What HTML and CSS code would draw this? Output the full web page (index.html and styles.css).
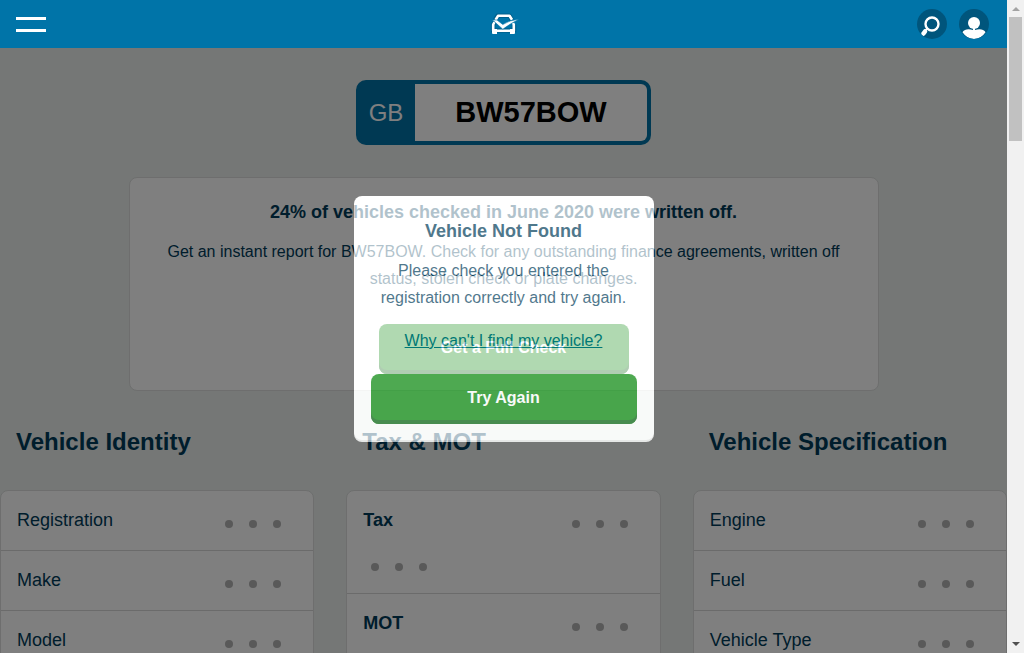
FILE: index.html
```html
<!DOCTYPE html>
<html lang="en">
<head>
<meta charset="utf-8">
<meta name="viewport" content="width=device-width, initial-scale=1">
<title>BW57BOW</title>
<link rel="stylesheet" href="styles.css">
</head>
<body>
<div class="page">
  <header class="topbar">
    <button class="menu" aria-label="Menu"><span class="menu-line"></span><span class="menu-line"></span></button>
    <a class="logo" href="#" aria-label="Home">
      <svg width="34" height="24" viewBox="0 0 34 24" fill="none" stroke="#fff" stroke-linejoin="round">
        <g stroke="#004a6c" stroke-opacity=".45" stroke-width="4.500"><path d="M9 8 11.500 3.800h12L26 8M7.200 20.500v-8L9 10M28 20.500v-8M7 18.500H28"/></g>
        <path d="M9.500 8 12 3.800h11.500l2.500 4" stroke-width="2.600"/>
        <path d="M8.500 10 7.200 12.500v6.300h20.600v-6.300l-.8-1.500" stroke-width="2.600"/>
        <path d="M6 17h5v5H7q-1 0-1-1zM24 17h5v4q0 1-1 1h-4z" fill="#fff" stroke="none"/>
        <path d="M6.500 8H11l5.800 4.500Q23.500 8 33 7.200 25 11.200 16.800 17.200z" fill="#fff" stroke="#0074a8" stroke-width=".6"/>
      </svg>
    </a>
    <nav class="actions">
      <button class="round" aria-label="Search">
        <svg width="30" height="30" viewBox="0 0 30 30" fill="none" stroke="#fff"><circle cx="15" cy="15" r="6.500" stroke-width="2.400"/><path d="M10.500 19.500 8.500 21.500" stroke-width="2"/><path d="M8 22.500 6.500 24.500" stroke-width="4.500" stroke-linecap="round"/></svg>
      </button>
      <button class="round" aria-label="Account">
        <svg width="30" height="30" viewBox="0 0 30 30" fill="#fff"><circle cx="15" cy="14" r="6"/><path d="M14 18h2v3q5-1.500 8 0 2 .8 2.500 2.300Q22 30 15 30T3.500 23.300Q4 21.800 6 21q3-1.500 8 0z"/></svg>
      </button>
    </nav>
  </header>

  <main class="content">
    <div class="plate">
      <label class="plate-country" for="reg">GB</label>
      <input class="plate-input" id="reg" type="text" value="BW57BOW">
    </div>

    <section class="card promo">
      <h2 class="card-title">24% of vehicles checked in June 2020 were written off.</h2>
      <p class="promo-text">Get an instant report for BW57BOW. Check for any outstanding finance agreements, written off status, stolen check or plate changes.</p>
      <button class="btn btn-full">Get a Full Check</button>
    </section>

    <div class="columns">
      <section>
        <h2 class="section-title">Vehicle Identity</h2>
        <dl class="card list">
          <div class="row"><dt>Registration</dt><dd class="dots"><i></i><i></i><i></i></dd></div>
          <div class="row"><dt>Make</dt><dd class="dots"><i></i><i></i><i></i></dd></div>
          <div class="row"><dt>Model</dt><dd class="dots"><i></i><i></i><i></i></dd></div>
        </dl>
      </section>
      <section>
        <h2 class="section-title">Tax &amp; MOT</h2>
        <dl class="card list">
          <div class="row row-tall"><dt>Tax</dt><dd class="dots"><i></i><i></i><i></i></dd><dd class="dots dots-wide"><i></i><i></i><i></i></dd></div>
          <div class="row row-tall"><dt>MOT</dt><dd class="dots"><i></i><i></i><i></i></dd><dd class="dots dots-wide"><i></i><i></i><i></i></dd></div>
        </dl>
      </section>
      <section>
        <h2 class="section-title">Vehicle Specification</h2>
        <dl class="card list">
          <div class="row"><dt>Engine</dt><dd class="dots"><i></i><i></i><i></i></dd></div>
          <div class="row"><dt>Fuel</dt><dd class="dots"><i></i><i></i><i></i></dd></div>
          <div class="row"><dt>Vehicle Type</dt><dd class="dots"><i></i><i></i><i></i></dd></div>
        </dl>
      </section>
    </div>
  </main>

  <div class="modal" role="dialog" aria-labelledby="modal-title">
    <h2 class="card-title" id="modal-title">Vehicle Not Found</h2>
    <p class="modal-text">Please check you entered the registration correctly and try again.</p>
    <a class="modal-link" href="#">Why can't I find my vehicle?</a>
    <button class="btn">Try Again</button>
  </div>
</div>

<div class="scrollbar" aria-hidden="true">
  <span class="arrow arrow-up"></span>
  <span class="thumb"></span>
  <span class="arrow arrow-down"></span>
</div>
</body>
</html>
```

FILE: styles.css
```css
* { box-sizing: border-box; }

body {
  margin: 0;
  display: flex;
  height: 100vh;
  overflow: hidden;
  font: 16px/27px "Liberation Sans", Arial, sans-serif;
  color: #003c5a;
}

h2, p, dl, dd { margin: 0; }
button, input { font: inherit; border: 0; padding: 0; }
button { cursor: pointer; }
svg { display: block; }

.page {
  position: relative;
  flex: 1;
  min-width: 0;
  overflow: hidden;
  background: #ebefed;
}

/* Top bar, kept above the dimmed page */
.topbar {
  position: relative;
  z-index: 2;
  display: grid;
  grid-template-columns: 1fr auto 1fr;
  align-items: center;
  height: 48px;
  padding: 0 18px 0 16px;
  background: #0074a8;
}
.menu {
  display: grid;
  gap: 9px;
  width: 30px;
  background: none;
}
.menu-line { height: 3px; background: #fff; }
.actions { display: flex; justify-content: flex-end; gap: 12px; }
.round {
  width: 30px;
  height: 30px;
  border-radius: 50%;
  overflow: hidden;
  background: #00557c;
}

.content { padding-top: 32px; }

.plate {
  display: flex;
  width: 295px;
  height: 65px;
  margin: 0 auto 32px;
  border: 4px solid #0074a8;
  border-radius: 10px;
  background: #0074a8;
}
.plate-country {
  width: 55px;
  padding-right: 3px;
  color: #fff;
  font-size: 24px;
  line-height: 57px;
  text-align: center;
}
.plate-input {
  flex: 1;
  min-width: 0;
  border-radius: 0 6px 6px 0;
  background: #fff;
  color: #000;
  font-size: 29px;
  font-weight: bold;
  text-align: center;
}

.card {
  border: 1px solid #dcdfde;
  border-radius: 8px;
  background: #fff;
}
.card-title { font-size: 18px; line-height: 28px; }

.promo {
  display: flex;
  flex-direction: column;
  align-items: center;
  max-width: 750px;
  margin: 0 auto 35px;
  padding: 20px 24px 16px;
  text-align: center;
}
.promo-text { margin: 12px 0 32px; }

.btn {
  width: 100%;
  height: 50px;
  padding-bottom: 3px;
  border-radius: 8px;
  background: #008404;
  box-shadow: inset 0 -4px #00600a;
  color: #fff;
  font-weight: bold;
}
.btn-full { width: 250px; }

.columns {
  display: grid;
  grid-template-columns: repeat(3, 1fr);
  gap: 32px;
}
.section-title {
  margin-bottom: 32px;
  padding-left: 16px;
  font-size: 24px;
  line-height: 32px;
}
.row {
  display: flex;
  flex-wrap: wrap;
  align-content: flex-start;
  justify-content: space-between;
  height: 60px;
  padding: 16px 32px 0 16px;
  border-bottom: 1px solid #d8d8d8;
  font-size: 18px;
}
.row-tall { height: 103px; font-weight: bold; }
.dots { display: flex; gap: 16px; padding-top: 13px; }
.dots-wide { width: 100%; padding: 29px 8px 0; }
.dots i {
  width: 8px;
  height: 8px;
  border-radius: 50%;
  background: #b3b3b3;
}

/* The spread shadow dims everything outside the dialog */
.modal {
  position: absolute;
  top: 30%;
  left: 50%;
  width: 300px;
  margin-left: -150px;
  padding: 21px 17px 18px;
  border-radius: 8px;
  background: #fff;
  box-shadow: inset 0 -2px rgba(0, 0, 0, .1), 0 0 0 2000px rgba(0, 0, 0, .725);
  opacity: .69;
  text-align: center;
}
.modal-text { margin: 12px 0 16px; }
.modal-link {
  display: block;
  margin-bottom: 20px;
  color: #0074a8;
}

.scrollbar {
  display: flex;
  flex-direction: column;
  align-items: center;
  width: 17px;
  background: #f1f1f1;
}
.thumb {
  width: 13px;
  height: 124px;
  margin: 6px 0 auto;
  background: #c1c1c1;
}
.arrow { border: 4px solid transparent; border-top: 0; border-bottom: 0; }
.arrow-up { margin-top: 7px; border-bottom: 4px solid #a3a3a3; }
.arrow-down { margin-bottom: 7px; border-top: 4px solid #505050; }
```
